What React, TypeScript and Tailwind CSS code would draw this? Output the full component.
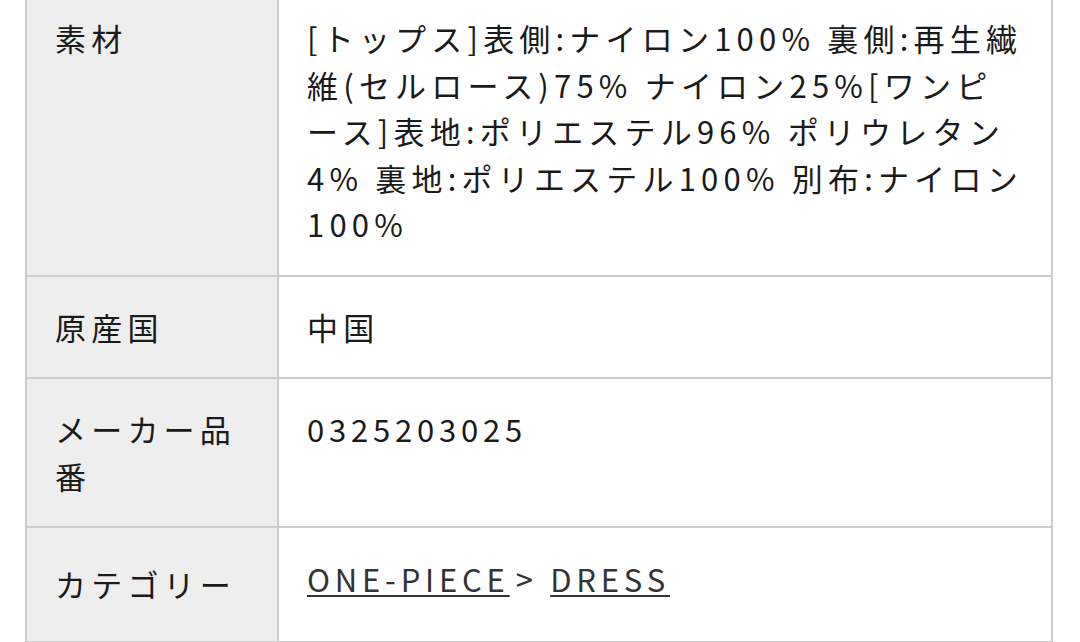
import React from "react";

const font = { fontFamily: '"Noto Sans CJK JP", "Noto Sans", sans-serif' };

function Row({
  label,
  children,
  first,
  pad = "py-[27px]",
  rpad,
}: {
  label: React.ReactNode;
  children: React.ReactNode;
  first?: boolean;
  pad?: string;
  rpad?: string;
}) {
  return (
    <div className={`flex ${first ? "" : "border-t-2 border-[#cccccc]"}`}>
      <div className={`w-[252px] shrink-0 bg-[#eeeeee] border-r-2 border-[#cccccc] pl-[28px] pr-[20px] ${pad}`}>
        {label}
      </div>
      <div className={`flex-1 pl-[28px] pr-[26px] ${rpad ?? pad} bg-white`}>{children}</div>
    </div>
  );
}

export default function App() {
  return (
    <div className="w-[1080px] h-[642px] overflow-hidden bg-white" style={font}>
      <div className="ml-[25px] w-[1028px] -mt-[14px] border-2 border-[#cccccc] text-[31px] leading-[46.5px] tracking-[5.2px] text-[#1a1a1a]">
        <Row label="素材" first>
          [トップス]表側:ナイロン100% 裏側:再生繊維(セルロース)75% ナイロン25%[ワンピース]表地:ポリエステル96% ポリウレタン4% 裏地:ポリエステル100% 別布:ナイロン100%
        </Row>
        <Row label="原産国">中国</Row>
        <Row label="メーカー品番">
          <span className="tracking-[4.8px]">0325203025</span>
        </Row>
        <Row label="カテゴリー" pad="py-[33px]" rpad="pt-[28px] pb-[38px]">
          <a className="underline decoration-2 underline-offset-[3px] tracking-[4.8px] text-[#333333]" href="#">
            ONE-PIECE
          </a>
          <span className="ml-[6px] text-[#333333]">&gt;</span>{" "}
          <a className="underline decoration-2 underline-offset-[3px] tracking-[4.8px] text-[#333333]" href="#">
            DRESS
          </a>
        </Row>
      </div>
    </div>
  );
}
